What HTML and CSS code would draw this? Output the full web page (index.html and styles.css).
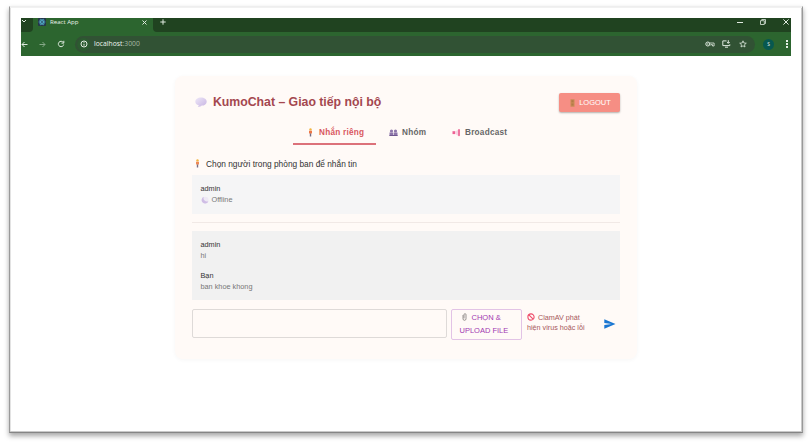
FILE: index.html
```html
<!DOCTYPE html>
<html lang="vi">
<head>
<meta charset="utf-8">
<title>React App</title>
<link rel="stylesheet" href="styles.css">
</head>
<body>
<div class="frame">
  <header class="browser">
    <div class="tabstrip">
      <div class="tab-search"><svg width="6" height="6" viewBox="0 0 6 6"><path d="M1 2l2 2 2-2" class="line"/></svg></div>
      <div class="browser-tab">
        <svg width="8" height="8" viewBox="0 0 8 8"><rect width="8" height="8" rx="1" fill="#25344a"/><g fill="none" stroke="#59bddb" stroke-width=".6"><ellipse cx="4" cy="4" rx="3.2" ry="1.2"/><ellipse cx="4" cy="4" rx="3.2" ry="1.2" transform="rotate(60 4 4)"/><ellipse cx="4" cy="4" rx="3.2" ry="1.2" transform="rotate(120 4 4)"/></g></svg>
        <span class="tab-title">React App</span>
        <svg width="5" height="5" viewBox="0 0 5 5"><path d="M.5 .5l4 4M4.500 .5l-4 4" class="line"/></svg>
      </div>
      <div class="new-tab"><svg width="6" height="6" viewBox="0 0 6 6"><path d="M3 .3v5.400M.3 3h5.400" class="line"/></svg></div>
      <div class="window-buttons">
        <svg width="6" height="6" viewBox="0 0 6 6"><path d="M0 3.500h6" class="line"/></svg>
        <svg width="6" height="6" viewBox="0 0 6 6"><path d="M.5 1.700h3.800v3.800H.5zM1.700 1.500V.5h3.800v4H4.500" class="line thin"/></svg>
        <svg width="6" height="6" viewBox="0 0 6 6"><path d="M.4 .4l5.200 5.200M5.600 .4L.4 5.600" class="line"/></svg>
      </div>
    </div>
    <div class="toolbar">
      <svg class="back" width="7" height="7" viewBox="0 0 7 7"><path d="M6.500 3.500H1M3.500 1L1 3.500 3.500 6" class="line"/></svg>
      <svg class="forward" width="7" height="7" viewBox="0 0 7 7"><path d="M.5 3.500H6M3.500 1L6 3.500 3.500 6" class="line"/></svg>
      <svg class="reload" width="8" height="8" viewBox="0 0 8 8"><path d="M6.300 2.500A2.700 2.700 0 1 0 6.700 4.500M6.800 .8v2.300H4.500" class="line"/></svg>
      <div class="address">
        <span class="info"><svg width="8" height="8" viewBox="0 0 8 8"><circle cx="4" cy="4" r="3" class="line"/><path d="M4 3.700v2M4 2v.8" class="line"/></svg></span>
        <span class="host">localhost<span class="port">:3000</span></span>
        <svg class="key" width="10" height="8" viewBox="0 0 10 8"><circle cx="2.800" cy="4" r="2" class="line"/><circle cx="2.800" cy="4" r=".7" fill="#d7e5d7"/><path d="M4.800 3h4.300v3H7.500V4.600H5.800V5.500" class="line thin"/></svg>
        <svg class="install" width="9" height="8" viewBox="0 0 9 8"><path d="M4.500 .9H.8v4.700h7V4.300M3 7.200h3M6.300 .2v3M4.900 2l1.400 1.400L7.700 2" class="line"/></svg>
        <svg class="star" width="8" height="8" viewBox="0 0 8 8"><path d="M4 .8l.9 2.200 2.400.2-1.800 1.500.5 2.300L4 5.800 2 7l.5-2.300L.7 3.200 3.100 3z" class="line thin"/></svg>
      </div>
      <span class="avatar">S</span>
      <span class="menu"><i></i><i></i><i></i></span>
    </div>
  </header>

  <main class="card">
    <div class="card-head">
      <svg class="bubble" width="12" height="11" viewBox="0 0 12 11"><defs><linearGradient id="lilac" x2="1" y2="1"><stop stop-color="#eee8f8"/><stop offset="1" stop-color="#c7b3e2"/></linearGradient></defs><path d="M6 .6c3.300 0 5.700 1.700 5.700 4.100S9.500 8.600 6.700 8.600C5.700 9.800 4.200 10.200 2.700 10c.8-.6 1-1.200 1-1.800C1.600 7.700.3 6.400.3 4.700.3 2.300 2.700.6 6 .6z" fill="url(#lilac)"/></svg>
      <h1>KumoChat – Giao tiếp nội bộ</h1>
      <button class="logout"><svg width="5" height="8" viewBox="0 0 5 8"><rect x=".5" y=".3" width="4" height="7.400" fill="#c78b54"/><path d="M1.500 1.300h2v2h-2zM1.500 4.500h2v2h-2z" fill="#b37a48"/></svg>LOGOUT</button>
    </div>

    <nav class="tabs">
      <a class="tab active"><svg width="7" height="9" viewBox="0 0 7 9"><circle cx="3.500" cy="1.400" r="1.200" fill="#f2b43f"/><path d="M2 2.700h3v1.800l-.5 1.200h-2L2 4.500z" fill="#ee7747"/><path d="M2.800 5.500h1.400v3H2.800z" fill="#766b82"/></svg>Nhắn riêng</a>
      <a class="tab group"><svg width="9" height="9" viewBox="0 0 9 9"><g fill="#8d76aa"><circle cx="2.500" cy="3" r="1.600"/><circle cx="6.500" cy="3" r="1.600"/><path d="M.5 4.500h3.700V8H.5zM4.800 4.500h3.700V8H4.800z"/></g><path d="M.5 7.500h8" stroke="#6e568e"/></svg>Nhóm</a>
      <a class="tab"><svg width="9" height="9" viewBox="0 0 9 9"><path d="M.5 3.200h2.800v2.900H.5z" fill="#ee6195"/><path d="M3.300 3.500L6 1.700v6L3.300 6z" fill="#f7d3e2"/><rect x="6" y="1" width="2" height="7.300" rx="1" fill="#ee769f"/></svg>Broadcast</a>
    </nav>

    <h2><svg width="7" height="9" viewBox="0 0 7 9"><circle cx="3.500" cy="1.400" r="1.200" fill="#f2b43f"/><path d="M2 2.700h3v1.800l-.5 1.200h-2L2 4.500z" fill="#ee8a57"/><path d="M2.800 5.500h1.400v3H2.800z" fill="#766b82"/></svg>Chọn người trong phòng ban để nhắn tin</h2>

    <section class="people">
      <div class="name">admin</div>
      <div class="status"><svg width="8" height="8" viewBox="0 0 8 8"><circle cx="4.200" cy="4" r="3.300" fill="#eee9f4"/><path d="M2.800 .8A3.500 3.500 0 1 0 7.400 5.200 3.400 3.400 0 0 1 2.800 .8z" fill="#cfbde5"/></svg>Offline</div>
    </section>

    <hr>

    <section class="messages">
      <div class="message"><div class="name">admin</div><div class="text">hi</div></div>
      <div class="message"><div class="name">Bạn</div><div class="text">ban khoe khong</div></div>
    </section>

    <form class="composer">
      <input type="text" aria-label="Tin nhắn">
      <button type="button" class="upload"><svg width="5" height="8" viewBox="0 0 5 8"><path d="M1 2v3.800a1.500 1.500 0 0 0 3 0V1.700a1 1 0 0 0-2 0v3.700" fill="none" stroke="#8c8987" stroke-width=".9"/></svg>CHỌN &amp;<br>UPLOAD FILE</button>
      <p class="scan"><svg width="8" height="8" viewBox="0 0 8 8"><circle cx="4" cy="4" r="3.100" fill="none" stroke="#ee4968" stroke-width="1.100"/><path d="M1.900 1.900l4.200 4.200" stroke="#ee4968" stroke-width="1.100"/></svg>ClamAV phát<br>hiện virus hoặc lỗi</p>
      <svg class="send" width="12" height="10" viewBox="0 0 12 10"><path d="M.3 .3L11.500 5 .3 9.700V6.100L7.500 5 .3 3.900z" fill="#1976d2"/></svg>
    </form>
  </main>
</div>
</body>
</html>
```
FILE: styles.css
```css
* { box-sizing: border-box; }
body {
  margin: 0;
  padding: 6px 9px 12px;
  height: 445px;
  overflow: hidden;
  background: #fff;
  font-family: "Liberation Sans", Arial, sans-serif;
}
svg { flex: none; display: block; }
.line { fill: none; stroke: #e0ebe0; stroke-width: 1; }
.thin { stroke-width: .8; }
.frame {
  height: 427px;
  padding: 11px 11px 0;
  border: 1px solid #999;
  border-top-color: #eee;
  border-bottom-color: #858585;
  box-shadow: 0 3px 5px rgba(0,0,0,.35), inset 0 1px 0 #f1f1f1, inset -1px -1px 0 #c9c9c9, inset 1px 0 0 #e3e3e3;
}
.browser {
  width: 770px;
  height: 38px;
  background: #2c652f;
  color: #edf4ed;
  font-family: "Open Sans", "Noto Sans", sans-serif;
}
.tabstrip { display: flex; height: 14px; background: #2c652f; }
.tab-search { width: 12px; background: #204320; border-radius: 0 0 4px 0; }
.browser-tab { display: flex; width: 120px; height: 8px; padding: 0 6px 0 5px; align-items: center; }
.tab-title { flex: 1; padding-left: 4px; font-size: 6.100px; line-height: 8px; }
.new-tab { flex: 1; padding: 1px 7px; background: #204320; border-radius: 0 0 0 4px; }
.window-buttons { display: flex; gap: 17px; padding: 1px 2px 0 0; background: #204320; }
.toolbar { display: flex; align-items: center; height: 24px; padding: 0; }
.forward { margin-left: 11px; opacity: .5; }
.reload { margin-left: 11px; }
.address { display: flex; align-items: center; width: 680px; height: 17px; margin-left: 10px; padding-left: 2px; border-radius: 9px; background: #315234; }
.info { display: flex; align-items: center; justify-content: center; width: 13px; height: 13px; border-radius: 50%; background: #2c5b30; }
.host { margin-left: 4px; font-size: 6.800px; line-height: 10px; }
.port { color: #a7b9a7; }
.key { margin-left: auto; }
.install { margin-left: 7px; }
.star { margin: 0 8px 0 8px; }
.avatar { width: 11px; height: 11px; margin-left: 8px; border-radius: 50%; background: #075850; text-align: center; font: 5px/11px "Open Sans", sans-serif; }
.menu { display: flex; flex-direction: column; gap: 1.500px; margin-left: 12px; }
.menu i { width: 1.700px; height: 1.700px; background: #e4eee4; }

.card {
  width: 462px;
  height: 283px;
  margin: 20px 0 0 154px;
  padding: 17px;
  border-radius: 8px;
  background: #fffaf7;
  box-shadow: 0 1px 4px rgba(0,0,0,.04);
}
.card-head { display: flex; align-items: center; height: 19px; padding-left: 3px; }
h1 { margin: 0 0 0 6px; color: #a4474f; font-size: 12.300px; line-height: 19px; font-weight: 700; letter-spacing: -.02px; white-space: nowrap; }
button { font-family: inherit; }
.logout {
  display: flex; align-items: center; justify-content: center; gap: 4px;
  width: 61px; height: 19px; margin-left: auto; padding: 0 0 0 2px;
  border: 0; border-radius: 2px;
  color: #fff; background: #f68e84; font-size: 7.500px;
  box-shadow: 0 1px 2px rgba(0,0,0,.3);
}
.tabs { display: flex; height: 24px; margin: 9px 0 0 101px; }
.tab {
  display: flex; align-items: center; gap: 4px; padding: 0 13px 0 14px;
  color: #666; font-size: 8.200px; font-weight: 700; letter-spacing: .25px; white-space: nowrap;
  border-bottom: 2px solid transparent;
}
.tab.active { width: 83px; gap: 5px; color: #d9575f; border-color: #dc717a; }
.group { width: 62px; padding: 0 0 0 13px; }
h2 { display: flex; align-items: center; gap: 5px; height: 11px; margin: 13px 0 0; padding-left: 2px; color: #333; font-size: 8.330px; font-weight: 400; white-space: nowrap; }
.people, .messages { padding: 9px 8px 0 8.500px; font-size: 7.300px; line-height: 10.500px; }
.people { height: 39px; margin-top: 6px; background: #f5f5f6; }
.name { color: #333; }
.status { display: flex; align-items: center; gap: 3px; color: #777; }
.text { color: #777; }
hr { height: 1px; margin: 8px 0; border: 0; background: #f1e9e6; }
.messages { height: 69px; background: #f1f1f1; }
.message { height: 31px; }
.composer { display: flex; margin-top: 9px; }
input { width: 255px; height: 29px; padding: 0 6px; border: 1px solid #dedad8; border-radius: 2px; background: transparent; font-size: 8px; }
.upload { width: 71px; height: 31px; margin-left: 4px; padding: 0 6px 0 7.500px; border: 1px solid #e2c3e6; border-radius: 2px; background: transparent; color: #a137b1; font-size: 7.500px; line-height: 12.500px; white-space: nowrap; text-align: left; }
.upload svg, .scan svg { display: inline-block; vertical-align: -1px; }
.upload svg { margin: 0 5px 0 2px; }
.scan { width: 64px; margin: 4px 0 0 5px; color: #a7595c; font-size: 7.200px; line-height: 10.300px; white-space: nowrap; }
.scan svg { margin-right: 3px; }
.send { margin: 10px 0 0 13px; }
```
